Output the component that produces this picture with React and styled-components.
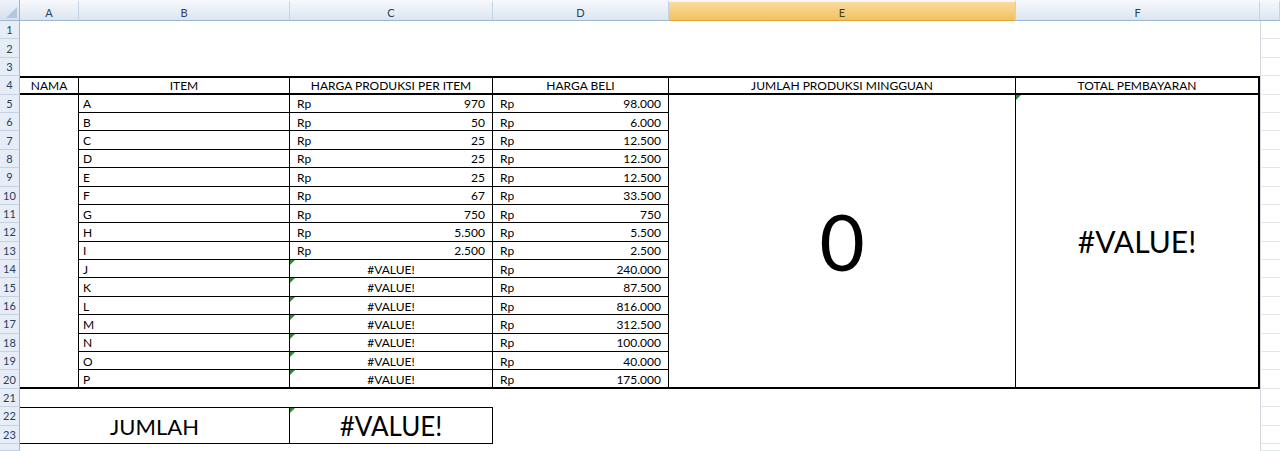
import React from "react";
import styled, { createGlobalStyle, css } from "styled-components";

const GlobalStyle = createGlobalStyle`
  body {
    margin: 0;
    background: #ffffff;
    font-family: Lato, "Open Sans", "Liberation Sans", sans-serif;
  }
`;

const COLS = ["A", "B", "C", "D", "E", "F", ""];

const items = [
  ["A", "970", "98.000"],
  ["B", "50", "6.000"],
  ["C", "25", "12.500"],
  ["D", "25", "12.500"],
  ["E", "25", "12.500"],
  ["F", "67", "33.500"],
  ["G", "750", "750"],
  ["H", "5.500", "5.500"],
  ["I", "2.500", "2.500"],
  ["J", null, "240.000"],
  ["K", null, "87.500"],
  ["L", null, "816.000"],
  ["M", null, "312.500"],
  ["N", null, "100.000"],
  ["O", null, "40.000"],
  ["P", null, "175.000"],
];

const Sheet = styled.div`
  display: grid;
  grid-template-columns: 20px 59px 211px 203px 176px 347px 244px 1fr;
  grid-template-rows: 21px repeat(23, 18.4px) 1fr;
  width: 1280px;
  height: 451px;
  overflow: hidden;
  background: #fff;
  color: #000;
  font-size: 12px;
`;

const Corner = styled.div`
  grid-column: 1;
  grid-row: 1;
  position: relative;
  background: linear-gradient(#eef3fa, #d6e0ee);
  border-right: 1px solid #9eb6ce;
  border-bottom: 1px solid #9eb6ce;
  box-sizing: border-box;
  &::after {
    content: "";
    position: absolute;
    right: 2px;
    bottom: 2px;
    border-left: 11px solid transparent;
    border-bottom: 11px solid #b5c7dd;
  }
`;

const ColHead = styled.div`
  grid-row: 1;
  grid-column: ${(p) => p.$col};
  display: flex;
  align-items: center;
  justify-content: center;
  box-sizing: border-box;
  padding-top: 2px;
  font-size: 11px;
  color: #27415f;
  border-top: 2px solid #f4f7fb;
  border-right: 1px solid #c5d2e2;
  border-bottom: 1px solid #9eb6ce;
  background: ${(p) =>
    p.$active
      ? "linear-gradient(#f9dba0, #f1c15f)"
      : "linear-gradient(#f4f7fb, #dce5f0)"};
  ${(p) =>
    p.$active &&
    css`
      border-bottom-color: #e3a539;
      color: #4a3a14;
    `}
`;

const RowHead = styled.div`
  grid-column: 1;
  grid-row: ${(p) => p.$row};
  display: flex;
  align-items: center;
  justify-content: center;
  box-sizing: border-box;
  font-size: 11px;
  color: #27415f;
  background: #e6edf7;
  border-right: 1px solid #9eb6ce;
  border-bottom: 1px solid #c5d2e2;
`;

const line = (w) => (w ? `${w}px solid #000` : "none");

const Cell = styled.div`
  grid-column: ${(p) => p.$col} / span ${(p) => p.$span || 1};
  grid-row: ${(p) => p.$row} / span ${(p) => p.$rspan || 1};
  position: relative;
  display: flex;
  align-items: center;
  justify-content: ${(p) => p.$align || "flex-start"};
  box-sizing: border-box;
  padding: 1px 4px 0;
  min-width: 0;
  white-space: nowrap;
  font-size: ${(p) => p.$size || 12}px;
  border-top: ${(p) => line(p.$bt)};
  border-right: ${(p) => line(p.$br)};
  border-bottom: ${(p) => line(p.$bb)};
  ${(p) =>
    p.$flag &&
    css`
      &::before {
        content: "";
        position: absolute;
        top: 0;
        left: 0;
        border-top: 5px solid #2f8a2f;
        border-right: 5px solid transparent;
      }
    `}
`;

const Money = styled(Cell)`
  justify-content: space-between;
  padding: 1px 7px 0 7px;
`;

const GridCell = styled.div`
  grid-column: 8;
  grid-row: ${(p) => p.$row};
  border-left: 1px solid #d4d8de;
  border-bottom: 1px solid #e2e5ea;
`;

const header = [
  "NAMA",
  "ITEM",
  "HARGA PRODUKSI PER ITEM",
  "HARGA BELI",
  "JUMLAH PRODUKSI MINGGUAN",
  "TOTAL PEMBAYARAN",
];

export default function App() {
  const rowNums = Array.from({ length: 24 }, (_, i) => i + 1);

  return (
    <>
      <GlobalStyle />
      <Sheet>
        <Corner />
        {COLS.map((c, i) => (
          <ColHead key={i} $col={i + 2} $active={c === "E"}>
            {c}
          </ColHead>
        ))}
        {rowNums.map((n) => (
          <RowHead key={n} $row={n + 1}>
            {n < 24 ? n : null}
          </RowHead>
        ))}
        {rowNums.map((n) => (
          <GridCell key={n} $row={n + 1} />
        ))}

        {header.map((h, i) => (
          <Cell
            key={h}
            $col={i + 2}
            $row={5}
            $bt={2}
            $bb={2}
            $br={i === 5 ? 2 : 1}
            $align="center"
          >
            {h}
          </Cell>
        ))}

        <Cell $col={2} $row={6} $rspan={16} $br={1} $bb={2} />

        {items.map(([name, prod, beli], i) => {
          const row = i + 6;
          const bb = i === items.length - 1 ? 2 : 1;
          return (
            <React.Fragment key={name}>
              <Cell $col={3} $row={row} $br={1} $bb={bb}>
                {name}
              </Cell>
              {prod ? (
                <Money $col={4} $row={row} $br={1} $bb={bb}>
                  <span>Rp</span>
                  <span>{prod}</span>
                </Money>
              ) : (
                <Cell $col={4} $row={row} $br={1} $bb={bb} $align="center" $flag>
                  #VALUE!
                </Cell>
              )}
              <Money $col={5} $row={row} $br={1} $bb={bb}>
                <span>Rp</span>
                <span>{beli}</span>
              </Money>
            </React.Fragment>
          );
        })}

        <Cell $col={6} $row={6} $rspan={16} $br={1} $bb={2} $align="center" $size={78}>
          0
        </Cell>
        <Cell $col={7} $row={6} $rspan={16} $br={2} $bb={2} $align="center" $size={30} $flag>
          #VALUE!
        </Cell>

        <Cell $col={2} $span={2} $row={23} $rspan={2} $bt={1} $br={1} $bb={1} $align="center" $size={22}>
          JUMLAH
        </Cell>
        <Cell $col={4} $row={23} $rspan={2} $bt={1} $br={1} $bb={1} $align="center" $size={26} $flag>
          #VALUE!
        </Cell>
      </Sheet>
    </>
  );
}
